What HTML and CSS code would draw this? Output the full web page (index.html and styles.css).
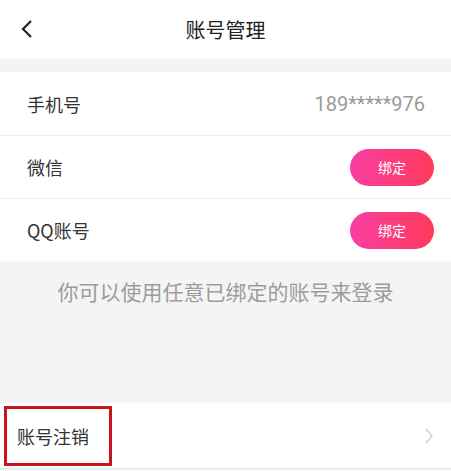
FILE: index.html
```html
<!DOCTYPE html>
<html lang="zh-CN">

<head>
    <meta charset="UTF-8">
    <meta name="viewport" content="width=device-width, initial-scale=1.0">
    <title>账号管理</title>
    <link rel="stylesheet" href="styles.css">
</head>

<body>
    <header class="topBar">
        <span class="back">
            <svg width="14" height="20" viewBox="0 0 14 20">
                <path d="M11 2 L3 10 L11 18" fill="none" stroke="#222" stroke-width="2.2" />
            </svg>
        </span>
        <h1>账号管理</h1>
    </header>
    <div class="gap"></div>
    <ul class="list">
        <li class="row">
            <span class="label">手机号</span>
            <span class="phone">189*****976</span>
        </li>
        <li class="row">
            <span class="label">微信</span>
            <button class="bindBtn">绑定</button>
        </li>
        <li class="row">
            <span class="label">QQ账号</span>
            <button class="bindBtn">绑定</button>
        </li>
    </ul>
    <div class="tips">
        <p>你可以使用任意已绑定的账号来登录</p>
    </div>
    <div class="row cancelRow">
        <span class="label mark">账号注销</span>
        <span class="arrow">
            <svg width="10" height="18" viewBox="0 0 10 18">
                <path d="M2 2 L8 9 L2 16" fill="none" stroke="#ccc" stroke-width="1.3" />
            </svg>
        </span>
    </div>
</body>

</html>
```

FILE: styles.css
```css
* {
    margin: 0;
    padding: 0;
    box-sizing: border-box;
}

body {
    background: #f4f4f4;
    font-family: 'Noto Sans CJK SC', 'Noto Sans', sans-serif;
    color: #333;
}

.topBar {
    height: 59px;
    background: white;
    display: flex;
    align-items: center;
    justify-content: center;
    position: relative;
}

.topBar h1 {
    font-size: 20px;
    font-weight: normal;
    color: #222;
}

.back {
    position: absolute;
    left: 20px;
    top: 19px;
    display: flex;
}

.gap {
    height: 13px;
}

.list {
    list-style: none;
    background: white;
}

.row {
    height: 63px;
    display: flex;
    align-items: center;
    justify-content: space-between;
    padding: 0 17px 0 27px;
    background: white;
}

.list .row + .row {
    border-top: 1px solid #eeeeee;
}

.label {
    font-size: 18px;
    color: #333;
}

.phone {
    font-family: 'Roboto', 'Noto Sans', sans-serif;
    font-size: 20px;
    color: #9a9a9a;
    margin-right: 9px;
}

.bindBtn {
    width: 84px;
    height: 37px;
    border: none;
    outline: none;
    border-radius: 19px;
    background: linear-gradient(90deg, #f93ea2, #ff3a5c);
    color: #fff;
    font-family: 'Noto Sans CJK SC', sans-serif;
    font-size: 14px;
}

.tips {
    height: 142px;
    padding-top: 15px;
    text-align: center;
}

.tips p {
    font-size: 21px;
    color: #9c9c9c;
}

.cancelRow {
    height: 66px;
    padding-left: 4px;
    padding-right: 17px;
    border-bottom: 1px solid #e6e6e6;
}

.mark {
    border: 3px solid #c8161d;
    width: 108px;
    height: 60px;
    display: flex;
    align-items: center;
    padding-left: 10px;
}

.arrow {
    display: flex;
}
```
